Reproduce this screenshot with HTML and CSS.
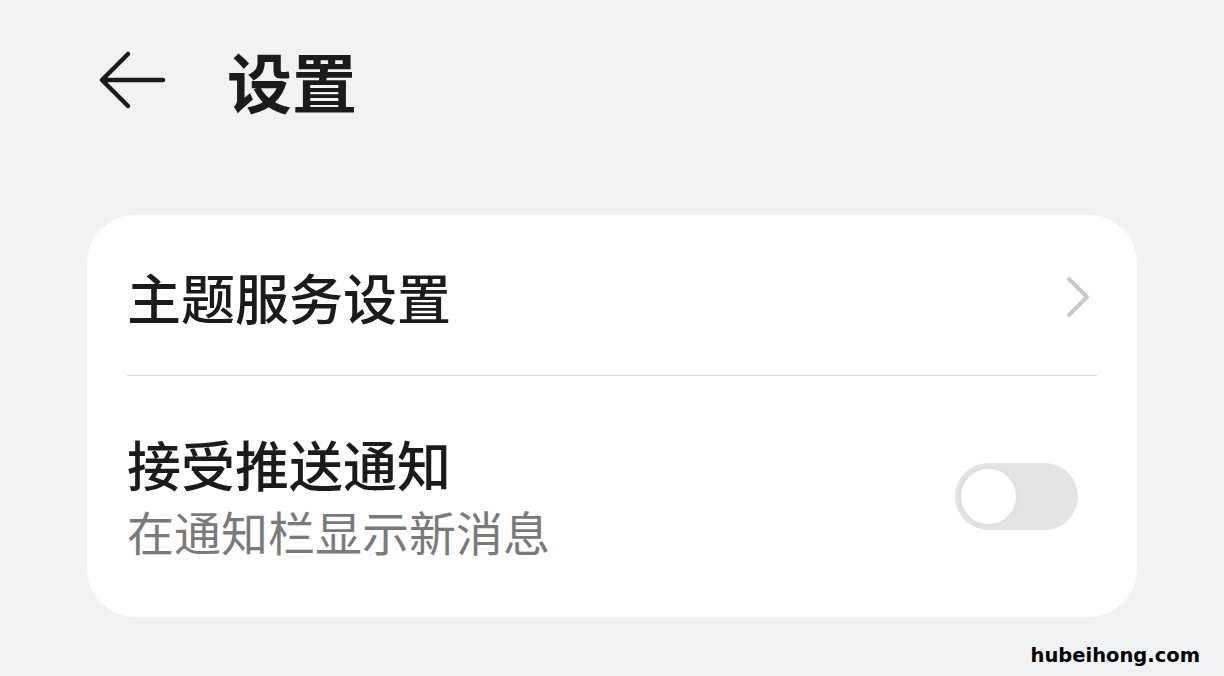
FILE: index.html
```html
<!DOCTYPE html>
<html lang="zh-CN">
<head>
    <meta charset="UTF-8">
    <meta name="viewport" content="width=device-width, initial-scale=1.0">
    <title>设置</title>
    <link rel="stylesheet" href="styles.css">
</head>
<body>
    <header class="top-bar">
        <svg class="back-icon" width="70" height="64" viewBox="0 0 70 64">
            <path d="M5 32 H66 M5 32 L31 6 M5 32 L31 58" fill="none" stroke="#1b1b1b" stroke-width="4.5" stroke-linecap="round" stroke-linejoin="round"/>
        </svg>
        <h1 class="page-title">设置</h1>
    </header>

    <div class="card">
        <div class="row row-link">
            <span class="row-title">主题服务设置</span>
            <svg class="chevron" width="28" height="44" viewBox="0 0 28 44">
                <path d="M4 4 L22 22 L4 40" fill="none" stroke="#c9c9c9" stroke-width="4" stroke-linecap="round" stroke-linejoin="round"/>
            </svg>
        </div>
        <div class="divider"></div>
        <div class="row row-switch">
            <div class="row-text">
                <span class="row-title">接受推送通知</span>
                <span class="row-sub">在通知栏显示新消息</span>
            </div>
            <div class="switch">
                <div class="knob"></div>
            </div>
        </div>
    </div>

    <div class="watermark">hubeihong.com</div>
</body>
</html>
```

FILE: styles.css
```css
* {
    margin: 0;
    padding: 0;
    box-sizing: border-box;
}

body {
    width: 1224px;
    height: 676px;
    overflow: hidden;
    position: relative;
    background-color: #f1f2f4;
    font-family: "Noto Sans CJK SC", "Noto Sans", sans-serif;
    color: #1b1b1b;
}

.top-bar {
    height: 160px;
    display: flex;
    align-items: center;
    padding-left: 97px;
}

.back-icon {
    display: block;
}

.page-title {
    margin-left: 60px;
    font-size: 65px;
    font-weight: 700;
    line-height: 1;
}

.card {
    margin: 55px 0 0 87px;
    width: 1050px;
    height: 402px;
    background-color: white;
    border-radius: 48px;
    padding: 0 40px;
}

.row {
    display: flex;
    align-items: center;
    justify-content: space-between;
}

.row-link {
    height: 160px;
    padding-top: 4px;
}

.chevron {
    margin-right: 4px;
}

.divider {
    height: 1px;
    background-color: #dcdcdc;
}

.row-switch {
    height: 241px;
}

.row-text {
    display: flex;
    flex-direction: column;
}

.row-title {
    font-size: 54px;
    font-weight: 500;
    line-height: 1.2;
}

.row-sub {
    margin-top: 3px;
    font-size: 47px;
    color: #7a7a7a;
    line-height: 1.3;
}

.switch {
    width: 123px;
    height: 67px;
    margin-right: 19px;
    background-color: #e4e4e4;
    border-radius: 34px;
    display: flex;
    align-items: center;
    padding-left: 3px;
}

.knob {
    width: 61px;
    height: 61px;
    border-radius: 50%;
    background-color: white;
    border: 3px solid #e0e0e0;
}

.watermark {
    position: absolute;
    right: 24px;
    bottom: 9px;
    font-family: "DejaVu Sans", sans-serif;
    font-weight: 700;
    font-size: 19.5px;
    color: #000;
}
```
